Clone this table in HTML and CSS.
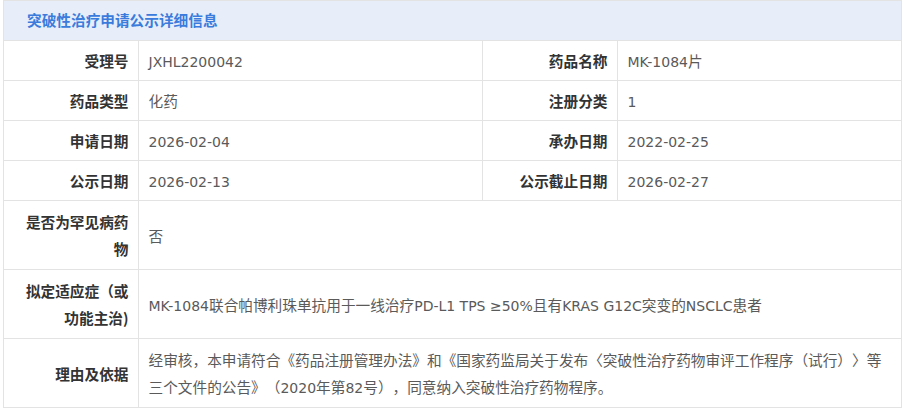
FILE: index.html
```html
<!DOCTYPE html>
<html lang="zh-CN">
<head>
<meta charset="utf-8">
<title>突破性治疗申请公示详细信息</title>
<link rel="stylesheet" href="styles.css">
</head>
<body>
<div class="panel">
  <div class="panel-head">突破性治疗申请公示详细信息</div>
  <table class="info">
    <colgroup>
      <col class="c-label1">
      <col class="c-value1">
      <col class="c-label2">
      <col class="c-value2">
    </colgroup>
    <tbody>
      <tr>
        <th>受理号</th><td><span class="lt">JXHL2200042</span></td>
        <th>药品名称</th><td><span class="lt">MK-1084</span>片</td>
      </tr>
      <tr>
        <th>药品类型</th><td>化药</td>
        <th>注册分类</th><td><span class="lt">1</span></td>
      </tr>
      <tr>
        <th>申请日期</th><td><span class="lt">2026-02-04</span></td>
        <th>承办日期</th><td><span class="lt">2022-02-25</span></td>
      </tr>
      <tr>
        <th>公示日期</th><td><span class="lt">2026-02-13</span></td>
        <th>公示截止日期</th><td><span class="lt">2026-02-27</span></td>
      </tr>
      <tr class="tall">
        <th>是否为罕见病药物</th><td colspan="3">否</td>
      </tr>
      <tr class="tall">
        <th>拟定适应症（或功能主治)</th><td colspan="3"><span class="lt">MK-1084</span>联合帕博利珠单抗用于一线治疗<span class="lt">PD-L1 TPS ≥50%</span>且有<span class="lt">KRAS G12C</span>突变的<span class="lt">NSCLC</span>患者</td>
      </tr>
      <tr class="tall">
        <th>理由及依据</th><td colspan="3">经审核，本申请符合《药品注册管理办法》和《国家药监局关于发布〈突破性治疗药物审评工作程序（试行）〉等三个文件的公告》（<span class="lt">2020</span>年第<span class="lt">82</span>号），同意纳入突破性治疗药物程序。</td>
      </tr>
    </tbody>
  </table>
</div>
</body>
</html>
```

FILE: styles.css
```css
html, body {
  margin: 0;
  padding: 0;
  background: #ffffff;
}

body {
  font-family: "Noto Sans CJK SC", "Noto Sans", sans-serif;
  font-size: 14.67px;
  color: #555;
  text-spacing-trim: space-all;
}

.panel {
  width: 899px;
  margin-left: 3px;
  border: 1px solid #e3e3e3;
  border-bottom: none;
  box-sizing: border-box;
}

.panel-head {
  height: 39px;
  line-height: 38px;
  padding-left: 23px;
  background: #e7eef9;
  color: #3a7bdc;
  font-weight: bold;
  border-bottom: 1px solid #e3e3e3;
}

.info {
  width: 100%;
  border-collapse: collapse;
  table-layout: fixed;
}

.c-label1 { width: 134px; }
.c-value1 { width: 344px; }
.c-label2 { width: 135px; }
.c-value2 { width: auto; }

.info th,
.info td {
  border: 1px solid #e3e3e3;
  line-height: 27px;
  padding: 6px 10px;
  vertical-align: middle;
}

.info tr:first-child th,
.info tr:first-child td {
  border-top: none;
}

.info th:first-child {
  border-left: none;
}

.info td:last-child {
  border-right: none;
}

.info th {
  text-align: right;
  font-weight: bold;
  color: #333;
  padding-left: 18px;
  padding-right: 9px;
}

.info td {
  text-align: left;
  color: #5a5a5a;
}

.lt {
  font-family: "DejaVu Sans", sans-serif;
  font-size: 14px;
  line-height: 1;
}

.info tr.tall th,
.info tr.tall td {
  padding-top: 7px;
  padding-bottom: 7px;
}
```
